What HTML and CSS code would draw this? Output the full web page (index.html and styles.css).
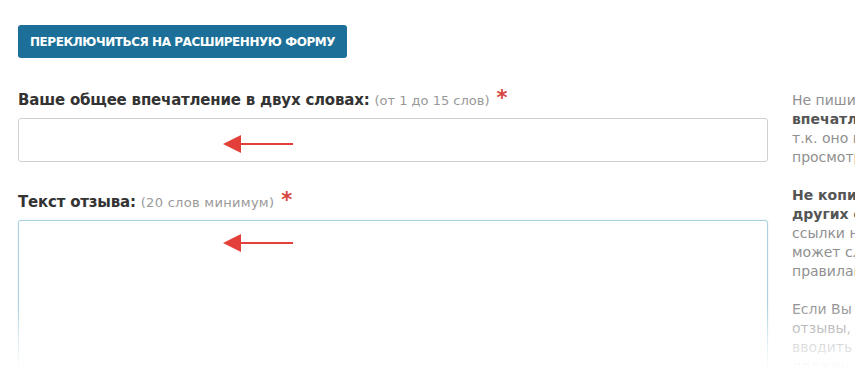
FILE: index.html
```html
<!DOCTYPE html>
<html lang="ru">
<head>
<meta charset="utf-8">
<title>Отзыв</title>
<link rel="stylesheet" href="styles.css">
</head>
<body>
<div class="page">
  <div class="main">
    <button class="btn" type="button">Переключиться на расширенную форму</button>

    <div class="field">
      <label class="label">Ваше общее впечатление в двух словах: <span class="hint">(от 1 до 15 слов)</span><span class="star">*</span></label>
      <div class="control">
        <div class="input"></div>
        <svg class="arrow" width="70" height="20" viewBox="0 0 70 20"><line x1="16" y1="10" x2="70" y2="10" stroke="#e4403a" stroke-width="2"/><polygon points="0,10 18,1 18,19" fill="#e4403a"/></svg>
      </div>
    </div>

    <div class="field field-2">
      <label class="label">Текст отзыва: <span class="hint hint-2">(20 слов минимум)</span><span class="star">*</span></label>
      <div class="control">
        <div class="textarea"></div>
        <svg class="arrow arrow-2" width="70" height="20" viewBox="0 0 70 20"><line x1="16" y1="10" x2="70" y2="10" stroke="#e4403a" stroke-width="2"/><polygon points="0,10 18,1 18,19" fill="#e4403a"/></svg>
      </div>
    </div>
  </div>

  <aside class="aside">
    <p>Не пишите весь отзыв в поле<br><b>впечатление в двух словах</b>,<br>т.к. оно показывается при<br>просмотре списка отзывов.</p>
    <p><b>Не копируйте отзывы с</b><br><b>других сайтов</b> и не ставьте<br>ссылки на них, так как это<br>может служить нарушением<br>правилами сайта.</p>
    <p>Если Вы уже оставляли<br>отзывы, Вам не нужно снова<br>вводить свои данные, так как<br>должен быть выполнен вход.</p>
  </aside>
</div>
<div class="fade"></div>
</body>
</html>
```

FILE: styles.css
```css
html, body {
  margin: 0;
  padding: 0;
  background: #fff;
}
body {
  width: 855px;
  height: 375px;
  overflow: hidden;
  font-family: "DejaVu Sans", "Liberation Sans", sans-serif;
  color: #333;
}
.page {
  display: flex;
  gap: 24px;
  padding: 25px 0 0 18px;
}
.main {
  width: 750px;
  flex-shrink: 0;
}
.btn {
  display: block;
  height: 33px;
  padding: 0 12px;
  border: 0;
  border-radius: 3px;
  background: #1b6f98;
  color: #fff;
  font-family: "DejaVu Sans", sans-serif;
  font-size: 12px;
  font-weight: bold;
  text-transform: uppercase;
  letter-spacing: -0.45px;
  cursor: pointer;
}
.field {
  margin-top: 32px;
}
.field-2 {
  margin-top: 30px;
}
.label {
  display: block;
  font-size: 15px;
  line-height: 20px;
  font-weight: bold;
  letter-spacing: -0.2px;
  color: #333;
  white-space: nowrap;
}
.hint {
  font-size: 13px;
  font-weight: normal;
  letter-spacing: 0;
  color: #999;
}
.hint-2 {
  letter-spacing: 0.3px;
}
.star {
  font-size: 21px;
  line-height: 0;
  color: #d8463f;
  margin-left: 7px;
}
.control {
  position: relative;
  margin-top: 7px;
}
.input {
  height: 42px;
  border: 1px solid #cfcfcf;
  border-radius: 3px;
  background: #fff;
}
.textarea {
  height: 200px;
  border: 1px solid #a8d0df;
  border-radius: 3px;
  background: #fff;
  box-shadow: 0 0 2px rgba(120, 180, 210, 0.25);
}
.arrow {
  position: absolute;
  left: 205px;
  top: 16px;
}
.arrow-2 {
  top: 13px;
}
.aside {
  width: 220px;
  flex-shrink: 0;
  margin-top: 66px;
  font-size: 14px;
  line-height: 19px;
  color: #909090;
  white-space: nowrap;
}
.aside p {
  margin: 0 0 19px;
}
.aside b {
  color: #555;
}
.fade {
  position: fixed;
  left: 0;
  right: 0;
  bottom: 0;
  height: 72px;
  background: linear-gradient(to bottom, rgba(255,255,255,0) 0%, rgba(255,255,255,0.55) 45%, #fff 92%);
  pointer-events: none;
}
```
